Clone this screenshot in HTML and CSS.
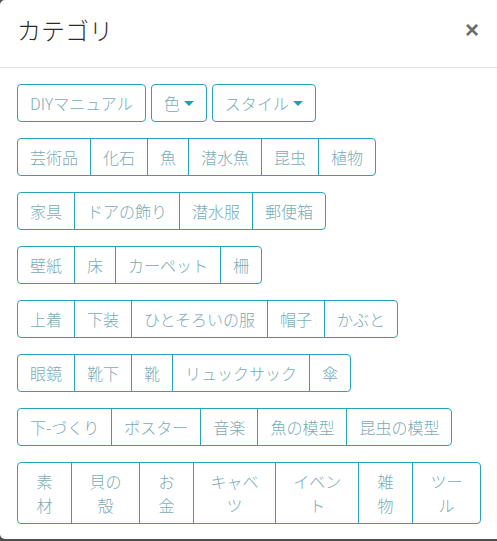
FILE: index.html
```html
<!DOCTYPE html>
<html lang="ja">
<head>
<meta charset="utf-8">
<title>カテゴリ</title>
<link rel="stylesheet" href="styles.css">
</head>
<body>
<div class="modal">
  <div class="modal-header">
    <h5 class="modal-title">カテゴリ</h5>
    <span class="close">×</span>
  </div>
  <div class="modal-body">
    <div class="row-sep">
      <span class="btn">DIYマニュアル</span>
      <span class="btn caret">色</span>
      <span class="btn caret">スタイル</span>
    </div>
    <div class="group">
      <span class="btn">芸術品</span><span class="btn">化石</span><span class="btn">魚</span><span class="btn">潜水魚</span><span class="btn">昆虫</span><span class="btn">植物</span>
    </div>
    <div class="group">
      <span class="btn">家具</span><span class="btn">ドアの飾り</span><span class="btn">潜水服</span><span class="btn">郵便箱</span>
    </div>
    <div class="group">
      <span class="btn">壁紙</span><span class="btn">床</span><span class="btn">カーペット</span><span class="btn">柵</span>
    </div>
    <div class="group">
      <span class="btn">上着</span><span class="btn">下装</span><span class="btn">ひとそろいの服</span><span class="btn">帽子</span><span class="btn">かぶと</span>
    </div>
    <div class="group">
      <span class="btn">眼鏡</span><span class="btn">靴下</span><span class="btn">靴</span><span class="btn">リュックサック</span><span class="btn">傘</span>
    </div>
    <div class="group">
      <span class="btn">下-づくり</span><span class="btn">ポスター</span><span class="btn">音楽</span><span class="btn">魚の模型</span><span class="btn">昆虫の模型</span>
    </div>
    <div class="group">
      <span class="btn">素材</span><span class="btn">貝の殻</span><span class="btn">お金</span><span class="btn">キャベツ</span><span class="btn">イベント</span><span class="btn">雑物</span><span class="btn">ツール</span>
    </div>
  </div>
</div>
</body>
</html>
```
FILE: styles.css
```css
html, body {
  margin: 0;
  padding: 0;
  height: 100%;
  overflow: hidden;
  background: #4f4f4f;
}
body {
  font-family: "Noto Sans CJK JP", "Noto Sans", sans-serif;
  color: #212529;
}
.modal {
  width: 497px;
  height: 539px;
  background: #fff;
  border-radius: 5px 0 0 5px;
  box-sizing: border-box;
}
.modal-header {
  display: flex;
  align-items: center;
  justify-content: space-between;
  padding: 12px 18px 19px 17px;
  border-bottom: 1px solid #dee2e6;
}
.modal-title {
  margin: 0;
  font-size: 24px;
  font-weight: 300;
  line-height: 36px;
  color: #2b2b2b;
}
.close {
  font-family: "Liberation Sans", "DejaVu Sans", sans-serif;
  font-size: 24px;
  font-weight: 700;
  line-height: 36px;
  color: #6d6d6d;
}
.modal-body {
  padding: 16px 16px 16px 17px;
  display: flex;
  flex-direction: column;
  align-items: flex-start;
  gap: 16px;
}
.row-sep {
  display: flex;
  gap: 5px;
}
.group {
  display: flex;
}
.btn {
  display: block;
  font-size: 16px;
  font-weight: 300;
  line-height: 24px;
  padding: 6px 12px;
  border: 1px solid #2ba3b6;
  border-radius: 4px;
  color: #7aacb6;
  text-align: center;
  white-space: normal;
  flex: 1 1 auto;
}
.group .btn {
  border-radius: 0;
}
.group .btn + .btn {
  margin-left: -1px;
}
.group .btn:first-child {
  border-radius: 4px 0 0 4px;
}
.group .btn:last-child {
  border-radius: 0 4px 4px 0;
}
.caret::after {
  content: "";
  display: inline-block;
  margin-left: 4px;
  vertical-align: 4px;
  border-top: 5px solid #1f9fb7;
  border-left: 5px solid transparent;
  border-right: 5px solid transparent;
}
```
